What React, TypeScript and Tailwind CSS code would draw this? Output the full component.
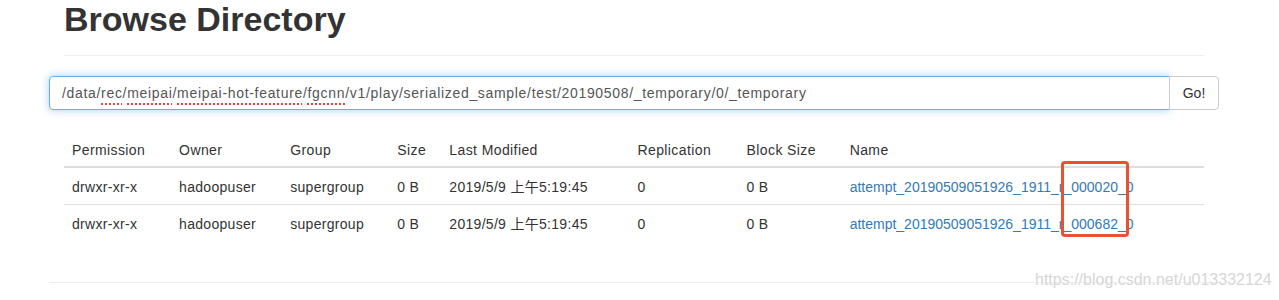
import React from "react";

const font = { fontFamily: '"Liberation Sans", Arial, "Noto Sans CJK SC", sans-serif' };

const cols = [107, 111, 107, 52, 188, 109, 103, 362];
const headers = ["Permission", "Owner", "Group", "Size", "Last Modified", "Replication", "Block Size", "Name"];
const rows = [
  ["drwxr-xr-x", "hadoopuser", "supergroup", "0 B", "2019/5/9 上午5:19:45", "0", "0 B", "attempt_20190509051926_1911_r_000020_0"],
  ["drwxr-xr-x", "hadoopuser", "supergroup", "0 B", "2019/5/9 上午5:19:45", "0", "0 B", "attempt_20190509051926_1911_r_000682_0"],
];

function Sp({ children }: { children: React.ReactNode }) {
  return (
    <span className="underline decoration-dotted decoration-[#e0483a] decoration-2 underline-offset-[5px]">
      {children}
    </span>
  );
}

export default function App() {
  return (
    <div className="relative h-[300px] w-[1279px] overflow-hidden bg-white text-[14px] text-[#333]" style={font}>
      <div className="ml-[49px] w-[1170px]">
        <div className="mx-[15px] border-b border-[#eee] pb-[17px]">
          <h1 className="text-[34px] font-bold leading-[38px] text-[#333]">Browse Directory</h1>
        </div>
        <div className="mt-[20px] flex h-[34px]">
          <div className="flex flex-1 items-center rounded-l-[4px] border border-[#66afe9] px-[12px] text-[14px] tracking-[0.68px] text-[#555] shadow-[0_0_8px_rgba(102,175,233,0.6)]">
            <span className="whitespace-nowrap pt-px">
              /data/<Sp>rec</Sp>/<Sp>meipai</Sp>/<Sp>meipai-hot-feature</Sp>/<Sp>fgcnn</Sp>/v1/play/serialized_sample/test/20190508/_temporary/0/_temporary
            </span>
          </div>
          <button className="-ml-px flex w-[50px] items-center justify-center rounded-r-[4px] border border-[#ccc] bg-white text-[14px] text-[#333]">
            Go!
          </button>
        </div>
        <table className="mx-[15px] mt-[20px] w-[1140px] table-fixed border-collapse">
          <colgroup>
            {cols.map((w, i) => (
              <col key={i} style={{ width: w }} />
            ))}
          </colgroup>
          <thead>
            <tr>
              {headers.map((h) => (
                <th
                  key={h}
                  className="border-b-2 border-[#ddd] px-[8px] pb-[6px] pt-[10px] text-left font-normal leading-[20px] tracking-[0.4px] text-[#333]"
                >
                  {h}
                </th>
              ))}
            </tr>
          </thead>
          <tbody>
            {rows.map((r, ri) => (
              <tr key={ri}>
                {r.map((c, ci) => (
                  <td
                    key={ci}
                    className={`whitespace-nowrap px-[8px] pb-[7px] pt-[9px] leading-[20px] ${ri > 0 ? "border-t border-[#ddd]" : ""} ${ci === 7 ? "text-[#337ab7]" : "tracking-[0.3px]"}`}
                  >
                    {c}
                  </td>
                ))}
              </tr>
            ))}
          </tbody>
        </table>
        <div className="mt-[41px] border-t border-[#eee]" />
      </div>
      <div className="absolute left-[1061px] top-[161px] h-[76px] w-[68px] rounded-[4px] border-[3px] border-[#ea5131]" />
      <div
        className="absolute left-[1035px] top-[270px] text-[16px] leading-[20px] text-[#d6d6d6]"
        style={{ textShadow: "0 0 1px #fff, 0 0 1px #fff" }}
      >
        https://blog.csdn.net/u013332124
      </div>
    </div>
  );
}
